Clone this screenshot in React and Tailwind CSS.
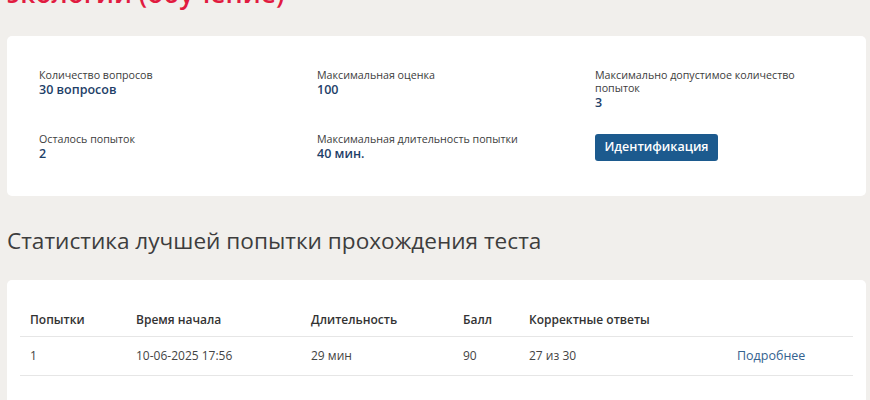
const info = [
  { label: 'Количество вопросов', value: '30 вопросов' },
  { label: 'Максимальная оценка', value: '100' },
  { label: 'Максимально допустимое количество попыток', value: '3' },
];

const rows = [
  { n: '1', start: '10-06-2025 17:56', dur: '29 мин', score: '90', correct: '27 из 30' },
];

const Field = ({ label, value }) => (
  <div>
    <p className="text-[10.7px] leading-[13px] text-[#3c3c3c]">{label}</p>
    <p className="text-[12.5px] leading-[15px] font-semibold text-[#1e4068]">{value}</p>
  </div>
);

const App = () => {
  return (
    <div
      className="h-[400px] overflow-hidden bg-[#f1efec] pl-[7px] pr-[4px]"
      style={{ fontFamily: '"Open Sans", "Noto Sans", sans-serif' }}
    >
      {/* Page title, scrolled mostly out of view */}
      <h1 className="mt-[-24px] text-[26.5px] leading-[34px] font-semibold text-[#e11b40]">
        экологии (обучение)
      </h1>

      {/* Test summary */}
      <div className="mt-[26px] rounded-[5px] bg-white pl-[32px] pr-[32px] pt-[33px] pb-[35px]">
        <div className="grid grid-cols-[278px_278px_215px] gap-y-[23px]">
          {info.map((f) => (
            <Field key={f.label} label={f.label} value={f.value} />
          ))}
          <Field label="Осталось попыток" value="2" />
          <Field label="Максимальная длительность попытки" value="40 мин." />
          <div>
            <button className="h-[27px] w-[123px] rounded-[3px] bg-[#1c5a8e] text-[12.5px] font-semibold text-white">
              Идентификация
            </button>
          </div>
        </div>
      </div>

      <h2 className="mt-[30px] text-[22.6px] leading-[30px] text-[#3d3d3d]">
        Статистика лучшей попытки прохождения теста
      </h2>

      {/* Best attempt table */}
      <div className="mt-[24px] rounded-[5px] bg-white px-[13px] pt-[24px] pb-[40px]">
        <div className="grid grid-cols-[106px_175px_152px_66px_208px_1fr] border-b border-[#e6e6e6] py-[8px] text-[12px] leading-[16px] font-semibold text-[#333]">
          <div className="pl-[10px]">Попытки</div>
          <div className="pl-[10px]">Время начала</div>
          <div className="pl-[10px]">Длительность</div>
          <div className="pl-[10px]">Балл</div>
          <div className="pl-[10px]">Корректные ответы</div>
          <div />
        </div>
        {rows.map((r) => (
          <div
            key={r.n}
            className="grid h-[39px] grid-cols-[106px_175px_152px_66px_208px_1fr] items-center border-b border-[#e6e6e6] text-[12px] text-[#444]"
          >
            <div className="pl-[10px]">{r.n}</div>
            <div className="pl-[10px]">{r.start}</div>
            <div className="pl-[10px]">{r.dur}</div>
            <div className="pl-[10px]">{r.score}</div>
            <div className="pl-[10px]">{r.correct}</div>
            <div className="pl-[10px]">
              <a href="#" className="text-[12.5px] text-[#34628f]">Подробнее</a>
            </div>
          </div>
        ))}
      </div>
    </div>
  );
};

export default App;
